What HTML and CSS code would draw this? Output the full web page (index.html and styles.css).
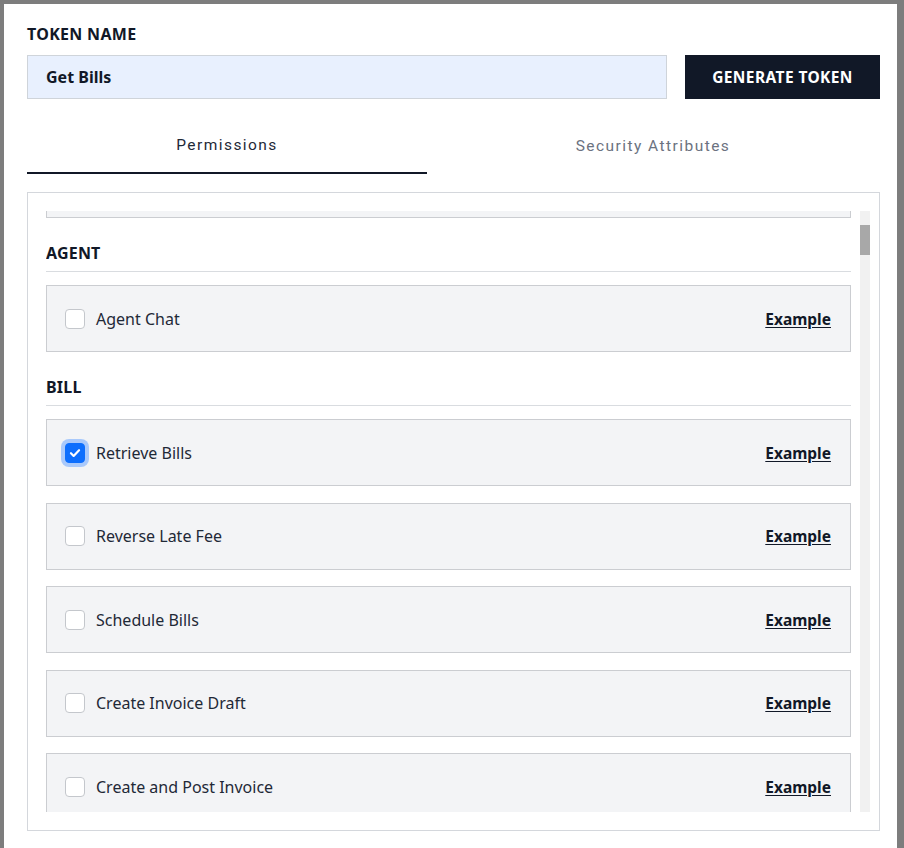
FILE: index.html
```html
<!DOCTYPE html>
<html lang="en">
<head>
<meta charset="utf-8">
<title>Generate Token</title>
<link rel="stylesheet" href="styles.css">
</head>
<body>
<div class="backdrop">
  <div class="modal">
    <label class="field-label" for="token-name">TOKEN NAME</label>
    <div class="name-row">
      <input id="token-name" class="name-input" type="text" value="Get Bills">
      <button class="generate-btn" type="button">GENERATE TOKEN</button>
    </div>
    <div class="tabs">
      <div class="tab active">Permissions</div>
      <div class="tab">Security Attributes</div>
    </div>
    <div class="perm-box">
      <div class="perm-scroll">
        <div class="perm-list scrolled">
          <div class="perm-item"></div>

          <h3 class="group-title">AGENT</h3>
          <div class="perm-item">
            <span class="checkbox"></span>
            <span class="perm-label">Agent Chat</span>
            <a class="example" href="#">Example</a>
          </div>

          <h3 class="group-title">BILL</h3>
          <div class="perm-item">
            <span class="checkbox checked">
              <svg viewBox="0 0 20 20" width="20" height="20"><path d="M5.5 10.3l3 3 6-6.4" fill="none" stroke="#fff" stroke-width="2.4" stroke-linecap="round" stroke-linejoin="round"/></svg>
            </span>
            <span class="perm-label">Retrieve Bills</span>
            <a class="example" href="#">Example</a>
          </div>
          <div class="perm-item">
            <span class="checkbox"></span>
            <span class="perm-label">Reverse Late Fee</span>
            <a class="example" href="#">Example</a>
          </div>
          <div class="perm-item">
            <span class="checkbox"></span>
            <span class="perm-label">Schedule Bills</span>
            <a class="example" href="#">Example</a>
          </div>
          <div class="perm-item">
            <span class="checkbox"></span>
            <span class="perm-label">Create Invoice Draft</span>
            <a class="example" href="#">Example</a>
          </div>
          <div class="perm-item">
            <span class="checkbox"></span>
            <span class="perm-label">Create and Post Invoice</span>
            <a class="example" href="#">Example</a>
          </div>
        </div>
      </div>
      <div class="scrollbar">
        <div class="scroll-thumb"></div>
      </div>
    </div>
  </div>
</div>
</body>
</html>
```
FILE: styles.css
```css
* { box-sizing: border-box; }

html, body {
  margin: 0;
  padding: 0;
  height: 100%;
  overflow: hidden;
}

body {
  background: #7d7d7d;
  font-family: "Noto Sans", "Open Sans", sans-serif;
  color: #111827;
}

.backdrop {
  padding: 4px 7px 0 4px;
  height: 100%;
}

.modal {
  background: #ffffff;
  height: 100%;
  padding: 18px 17px 0 23px;
}

.field-label {
  display: block;
  font-size: 16px;
  font-weight: 700;
  line-height: 24px;
  color: #111827;
  letter-spacing: 0.3px;
}

.name-row {
  display: flex;
  gap: 18px;
  margin-top: 9px;
}

.name-input {
  flex: 1;
  height: 44px;
  margin: 0;
  border: 1px solid #cfd4da;
  background: #e8f0fe;
  padding: 0 18px;
  font-family: "Noto Sans", "Open Sans", sans-serif;
  font-size: 16px;
  font-weight: 700;
  color: #111827;
  outline: none;
}

.generate-btn {
  width: 195px;
  height: 44px;
  border: 0;
  margin: 0;
  background: #111827;
  color: #ffffff;
  font-family: "Noto Sans", "Open Sans", sans-serif;
  font-size: 15.5px;
  font-weight: 700;
  letter-spacing: 0.4px;
}

.tabs {
  display: flex;
  margin-top: 18px;
  width: 852px;
}

.tab {
  flex: 0 0 400px;
  height: 57px;
  display: flex;
  align-items: center;
  justify-content: center;
  padding-top: 1px;
  font-family: Roboto, "Liberation Sans", sans-serif;
  font-size: 15.5px;
  letter-spacing: 1.45px;
  color: #6b7280;
}

.tab + .tab {
  flex: 1;
}

.tab.active {
  color: #1f2937;
  border-bottom: 2px solid #111827;
}

.perm-box {
  margin-top: 18px;
  width: 853px;
  height: 639px;
  border: 1px solid #d4d7dc;
  padding: 18px 9px 18px 18px;
  display: flex;
}

.perm-scroll {
  flex: 1;
  overflow: hidden;
  padding-right: 9px;
}

.perm-list {
  display: flex;
  flex-direction: column;
}

.perm-list.scrolled {
  margin-top: -60px;
}

.group-title {
  margin: 23px 0 13px;
  padding-bottom: 6px;
  border-bottom: 1px solid #d9dce0;
  font-size: 16px;
  font-weight: 700;
  line-height: 24px;
  color: #111827;
  letter-spacing: 0.2px;
}

.perm-item {
  height: 67px;
  flex: 0 0 67px;
  background: #f3f4f6;
  border: 1px solid #cbcdd1;
  display: flex;
  align-items: center;
  padding: 0 19px 0 18px;
}

.perm-item + .perm-item {
  margin-top: 16.5px;
}

.checkbox {
  width: 20px;
  height: 20px;
  flex: 0 0 20px;
  border: 1px solid #c4c7cc;
  border-radius: 4px;
  background: #ffffff;
  display: flex;
  align-items: center;
  justify-content: center;
}

.checkbox.checked {
  background: #0d6efd;
  border-color: #0d6efd;
  box-shadow: 0 0 0 4px #a9c9fb;
}

.checkbox svg {
  display: block;
}

.perm-label {
  flex: 1;
  margin-left: 11px;
  font-size: 16px;
  color: #1f2937;
}

.example {
  font-size: 15.5px;
  font-weight: 700;
  color: #111827;
  text-decoration: underline;
  text-underline-offset: 2px;
}

.scrollbar {
  width: 10px;
  flex: 0 0 10px;
  background: #f1f1f1;
  padding-top: 14px;
}

.scroll-thumb {
  height: 30px;
  background: #a8a8a8;
}
```
